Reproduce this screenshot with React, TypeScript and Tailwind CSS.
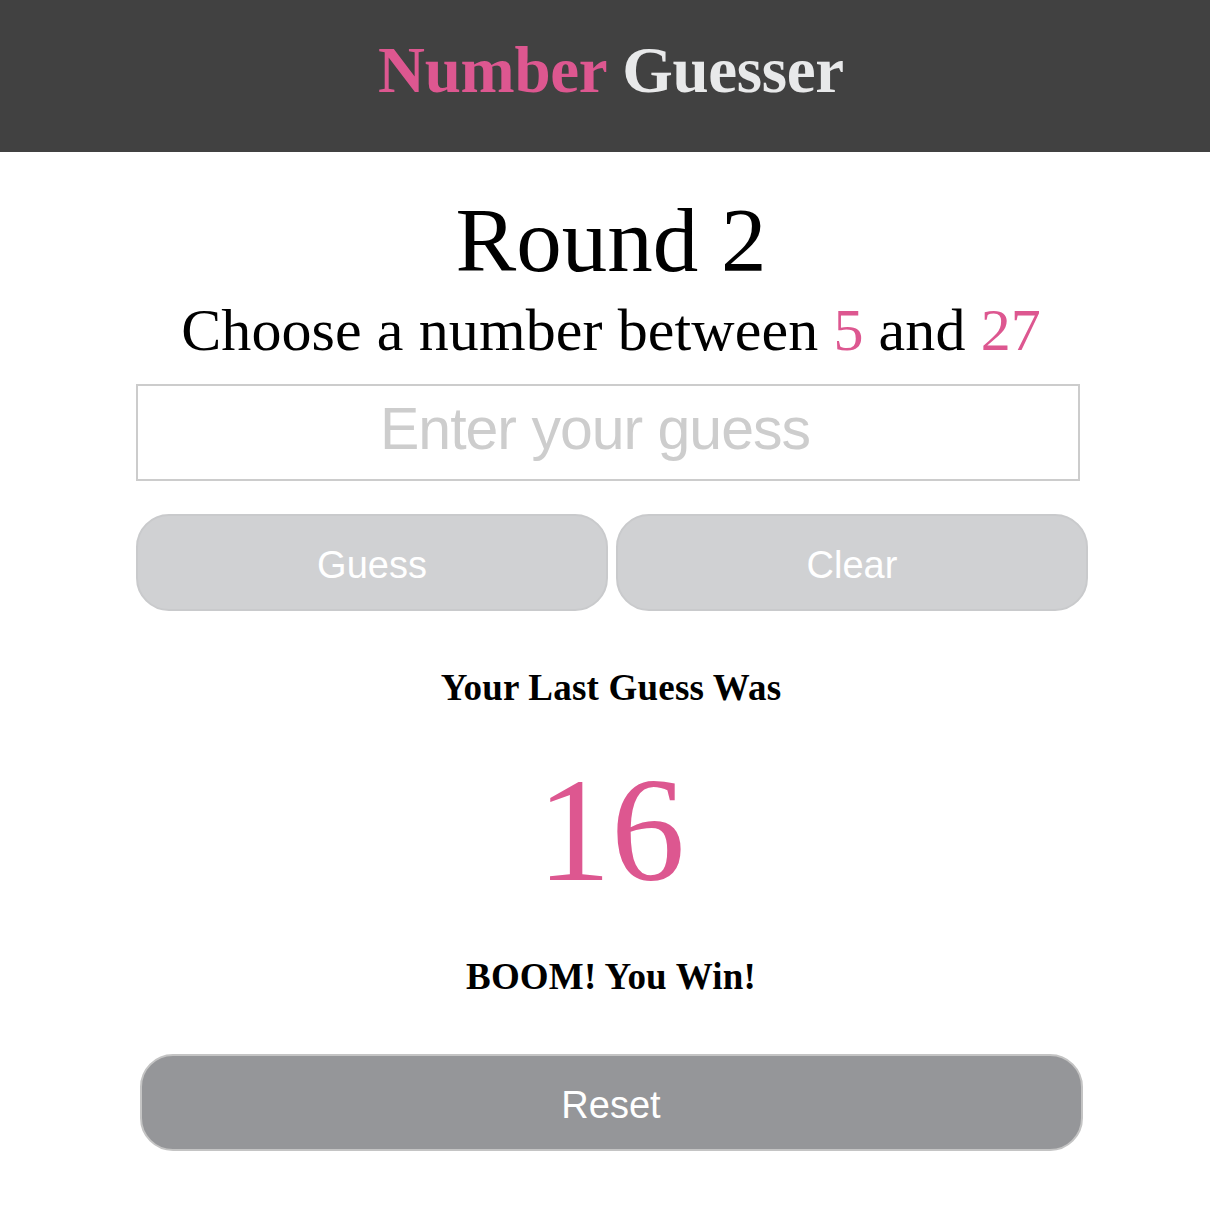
import React from "react";

const serif = { fontFamily: '"Liberation Serif", "Times New Roman", serif' };

const App = () => {
  return (
    <div className="min-h-[1210px] bg-white" style={serif}>
      {/* Header */}
      <header className="h-[152px] bg-[#414141] flex items-center justify-center pl-[12px] pb-[12px]">
        <h1 className="text-[65px] font-bold leading-none tracking-[-0.3px]">
          <span className="text-[#dd5790]">Number</span>{" "}
          <span className="text-[#e8e9ea]">Guesser</span>
        </h1>
      </header>

      <main className="flex flex-col items-center pl-[12px]">
        <h2 className="mt-[43px] text-[91px] leading-none text-black">Round 2</h2>
        <p className="mt-[14px] text-[60px] leading-none text-black tracking-[0.1px]">
          Choose a number between <span className="text-[#dd5790]">5</span> and{" "}
          <span className="text-[#dd5790]">27</span>
        </p>

        <input
          type="text"
          placeholder="Enter your guess"
          className="mt-[24px] mr-[6px] w-[944px] h-[97px] border-2 border-[#cccccc] pr-[26px] pb-[8px] text-center text-[59px] tracking-[-1px] placeholder:text-[#cdcdcd] font-['Liberation_Sans',Arial,sans-serif] outline-none"
        />

        <div className="mt-[33px] ml-[2px] flex gap-2 w-[952px]">
          <button className="flex-1 h-[97px] pt-[5px] rounded-[33px] bg-[#d0d1d3] border-2 border-[#c9cacc] text-white text-[38px] font-['Liberation_Sans',Arial,sans-serif]">
            Guess
          </button>
          <button className="flex-1 h-[97px] pt-[5px] rounded-[33px] bg-[#d0d1d3] border-2 border-[#c9cacc] text-white text-[38px] font-['Liberation_Sans',Arial,sans-serif]">
            Clear
          </button>
        </div>

        <h3 className="mt-[58px] text-[37px] font-bold leading-none text-black tracking-[0.2px]">Your Last Guess Was</h3>
        <p className="mt-[50px] text-[148px] leading-none text-[#dd5790]">16</p>
        <h3 className="mt-[54px] text-[37px] font-bold leading-none text-black tracking-[0.2px]">BOOM! You Win!</h3>

        <button className="mt-[59px] w-[943px] h-[97px] pt-[5px] rounded-[33px] bg-[#959699] border-2 border-[#c4c4c4] text-white text-[38px] font-['Liberation_Sans',Arial,sans-serif]">
          Reset
        </button>
      </main>
    </div>
  );
};

export default App;
